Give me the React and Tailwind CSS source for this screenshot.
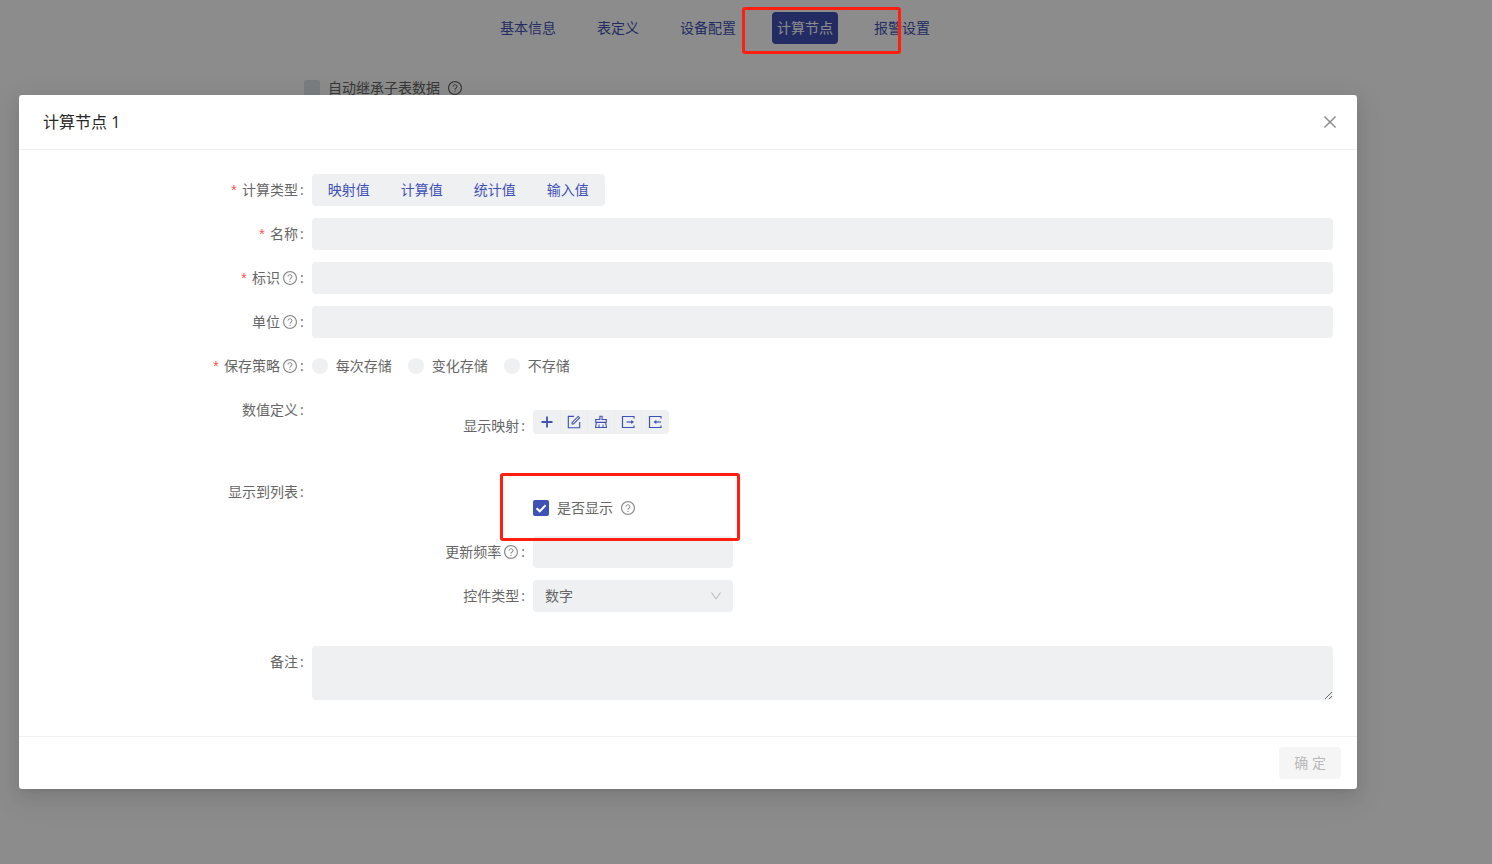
import { useState } from 'react';
import {
  AiOutlineClear,
  AiOutlineClose,
  AiOutlineDown,
  AiOutlineForm,
  AiOutlineQuestionCircle
} from 'react-icons/ai';

const PlusIcon = ({ size }) => (
  <svg width={size} height={size} viewBox="0 0 16 16" fill="none" stroke="currentColor" strokeWidth="1.8">
    <path d="M8 2.5v11M2.5 8h11" />
  </svg>
);

const ExportIcon = ({ size }) => (
  <svg width={size} height={size} viewBox="0 0 16 16" fill="none" stroke="currentColor" strokeWidth="1.2">
    <path d="M14 4.4V2.5H2.5v11H14v-1.9" />
    <path d="M6.5 8h6" />
    <path d="M11.2 6 14 8l-2.8 2z" fill="currentColor" stroke="none" />
  </svg>
);

const ImportIcon = ({ size }) => (
  <svg width={size} height={size} viewBox="0 0 16 16" fill="none" stroke="currentColor" strokeWidth="1.2">
    <path d="M14 4.4V2.5H2.5v11H14v-1.9" />
    <path d="M8 8h6" />
    <path d="M9.3 6 6.5 8l2.8 2z" fill="currentColor" stroke="none" />
  </svg>
);

const tabs = ['基本信息', '表定义', '设备配置', '计算节点', '报警设置'];
const calcTypes = ['映射值', '计算值', '统计值', '输入值'];
const saveModes = ['每次存储', '变化存储', '不存储'];
const tools = [
  { title: '新增', Icon: PlusIcon },
  { title: '编辑', Icon: AiOutlineForm },
  { title: '清空', Icon: AiOutlineClear },
  { title: '导出', Icon: ExportIcon },
  { title: '导入', Icon: ImportIcon }
];

function Row({ label, htmlFor, required, help, children }) {
  const Label = htmlFor ? 'label' : 'div';
  return (
    <div className="flex items-start">
      <Label htmlFor={htmlFor} className="w-5/24 shrink-0 h-8 pr-2 flex items-center justify-end">
        {required && <span className="mr-1 pt-1 font-['Liberation_Mono'] text-[#ff4d4f]">*</span>}
        {label}
        {help && <AiOutlineQuestionCircle size={16} className="ml-0.5 text-[#8c8c8c]" />}
        <span className="ml-0.5">:</span>
      </Label>
      <div className="flex-1 min-w-0">{children}</div>
    </div>
  );
}

export default function App() {
  const [form, setForm] = useState({ name: '', code: '', unit: '', rate: '', control: '数字', remark: '', save: '', show: true });
  const set = (key) => (e) => setForm({ ...form, [key]: e.target.value });

  return (
    <div className="relative min-h-screen bg-white text-sm text-[#666] font-['Open_Sans','Noto_Sans_CJK_SC',sans-serif]">
      <nav className="flex justify-center gap-[31px] pt-3 pr-[62px]">
        {tabs.map(tab => (
          <button
            key={tab}
            type="button"
            className={tab === '计算节点' ? 'h-8 px-[5px] rounded bg-[#3f51b5] text-white' : 'h-8 px-[5px] rounded text-[#3f51b5]'}
          >
            {tab}
          </button>
        ))}
      </nav>
      <label className="flex items-center gap-2 h-8 mt-7 pl-[304px]">
        <input type="checkbox" className="appearance-none size-4 rounded-xs bg-[#dde3ea]" />
        <span className="flex items-center gap-[7px]">
          自动继承子表数据
          <AiOutlineQuestionCircle size={16} />
        </span>
      </label>

      <div className="absolute inset-0 bg-black/45 pt-[95px] pl-[19px] pr-[135px]">
        <div
          role="dialog"
          aria-labelledby="dialog-title"
          className="bg-white rounded-[3px] shadow-[0_3px_6px_-4px_rgba(0,0,0,0.12),0_6px_16px_rgba(0,0,0,0.08),0_9px_28px_8px_rgba(0,0,0,0.05)]"
        >
          <div className="flex items-center justify-between h-[55px] pl-6 pr-[18px] border-b border-[#f0f0f0]">
            <h1 id="dialog-title" className="text-base text-[#262626]">计算节点 1</h1>
            <button type="button" aria-label="关闭" className="text-[#8c8c8c]">
              <AiOutlineClose size={18} />
            </button>
          </div>

          <form className="flex flex-col gap-3 px-6 pt-6 pb-9">
            <Row label="计算类型" required>
              <div className="inline-flex rounded bg-[#eff0f2] align-top">
                {calcTypes.map(type => (
                  <button key={type} type="button" className="h-8 px-4 -ml-px first:ml-0 text-[#3f51b5]">{type}</button>
                ))}
              </div>
            </Row>
            <Row label="名称" htmlFor="name" required>
              <input id="name" value={form.name} onChange={set('name')} className="block w-full h-8 px-3 rounded bg-[#eff0f2] outline-none" />
            </Row>
            <Row label="标识" htmlFor="code" required help>
              <input id="code" value={form.code} onChange={set('code')} className="block w-full h-8 px-3 rounded bg-[#eff0f2] outline-none" />
            </Row>
            <Row label="单位" htmlFor="unit" help>
              <input id="unit" value={form.unit} onChange={set('unit')} className="block w-full h-8 px-3 rounded bg-[#eff0f2] outline-none" />
            </Row>
            <Row label="保存策略" required help>
              <div className="flex items-center gap-4 h-8">
                {saveModes.map(mode => (
                  <label key={mode} className="flex items-center gap-2">
                    <input
                      type="radio"
                      name="save"
                      value={mode}
                      checked={form.save === mode}
                      onChange={set('save')}
                      className="appearance-none size-4 rounded-full bg-[#eff0f2] checked:border-4 checked:border-[#3f51b5]"
                    />
                    {mode}
                  </label>
                ))}
              </div>
            </Row>

            <Row label="数值定义">
              <div className="pt-4 pl-4 pr-5 pb-[22px]">
                <Row label="显示映射">
                  <div className="inline-flex rounded bg-[#eff0f2] text-[#3f51b5] align-top">
                    {tools.map(({ title, Icon }) => (
                      <button
                        key={title}
                        type="button"
                        aria-label={title}
                        className="flex items-center justify-center w-7 h-6 -ml-px first:ml-0 shadow-[inset_1px_0_#ebecef] first:shadow-none"
                      >
                        <Icon size={16} />
                      </button>
                    ))}
                  </div>
                </Row>
              </div>
            </Row>

            <Row label="显示到列表">
              <div className="relative flex flex-col gap-3 pt-4 pl-4 pr-5 pb-[22px]">
                <div className="flex">
                  <div className="w-5/24 shrink-0" />
                  <label className="flex items-center gap-2 h-8">
                    <span className="relative size-4">
                      <input
                        type="checkbox"
                        checked={form.show}
                        onChange={e => setForm({ ...form, show: e.target.checked })}
                        className="block appearance-none size-4 rounded-xs bg-[#eff0f2] checked:bg-[#3f51b5]"
                      />
                      {form.show && (
                        <svg viewBox="0 0 16 16" className="absolute inset-0 size-4 pointer-events-none" fill="none" stroke="white" strokeWidth="2">
                          <path d="M3.5 8.2 6.8 11.3 12.6 5.2" />
                        </svg>
                      )}
                    </span>
                    <span className="flex items-center gap-[7px]">
                      是否显示
                      <AiOutlineQuestionCircle size={16} className="text-[#8c8c8c]" />
                    </span>
                  </label>
                </div>
                <Row label="更新频率" htmlFor="rate" help>
                  <input id="rate" value={form.rate} onChange={set('rate')} className="block w-50 h-8 px-3 rounded bg-[#eff0f2] outline-none" />
                </Row>
                <Row label="控件类型" htmlFor="control">
                  <div className="relative w-50">
                    <select id="control" value={form.control} onChange={set('control')} className="block appearance-none w-full h-8 px-3 rounded bg-[#eff0f2] outline-none">
                      <option>数字</option>
                      <option>文本</option>
                      <option>开关</option>
                    </select>
                    <AiOutlineDown size={14} className="absolute right-2.5 top-[9px] text-[#bfbfbf] pointer-events-none" />
                  </div>
                </Row>
                {/* highlight around the visibility switch */}
                <div className="absolute left-[188px] -top-[3px] w-60 h-[68px] border-3 border-[#ff1e10] rounded-[3px] pointer-events-none" />
              </div>
            </Row>

            <Row label="备注" htmlFor="remark">
              <textarea id="remark" value={form.remark} onChange={set('remark')} className="block w-full h-[54px] px-3 py-1 rounded bg-[#eff0f2] outline-none resize-y" />
            </Row>
          </form>

          <div className="flex justify-end px-4 py-2.5 border-t border-[#f0f0f0]">
            <button type="button" disabled className="h-8 px-[15px] rounded bg-[#f5f5f5] text-[#b8b8b8]">确 定</button>
          </div>
        </div>

        {/* highlight around the active tab */}
        <div className="absolute left-[calc(50%-4px)] top-[7px] w-[159px] h-[47px] border-3 border-[#ff1e10] rounded-[3px] pointer-events-none" />
      </div>
    </div>
  );
}
